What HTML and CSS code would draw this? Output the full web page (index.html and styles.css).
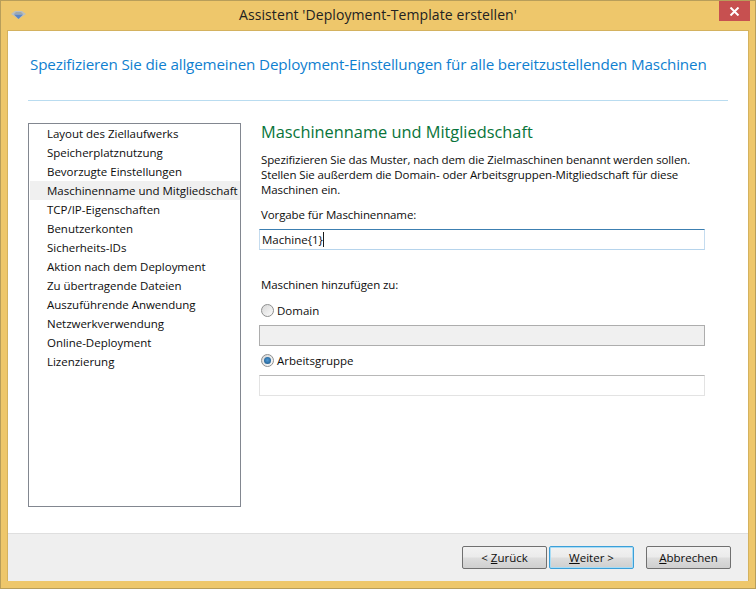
FILE: index.html
```html
<!DOCTYPE html>
<html lang="de">
<head>
<meta charset="utf-8">
<title>Assistent 'Deployment-Template erstellen'</title>
<link rel="stylesheet" href="styles.css">
</head>
<body>
<div class="window">
  <div class="titlebar">
    <svg class="appicon" width="15" height="8" viewBox="0 0 15 8"><path d="M0 3 4 0H11L15 3 7.500 8Z" fill="#b9bfc0"/><path d="M3 3.500H12L7.500 8Z" fill="#5b85c4"/><path d="M5 1H10L12 3H3Z" fill="#9ea8ad"/></svg>
    <div class="title">Assistent 'Deployment-Template erstellen'</div>
    <div class="close"><svg width="11" height="9" viewBox="0 0 11 9"><path d="M1.500.5 9.500 8.500M9.500.5 1.500 8.500" stroke="#fff" stroke-width="2" fill="none"/></svg></div>
  </div>
  <div class="client">
    <div class="header">Spezifizieren Sie die allgemeinen Deployment-Einstellungen für alle bereitzustellenden Maschinen</div>
    <div class="rule"></div>
    <div class="main">
      <ul class="steps">
        <li>Layout des Ziellaufwerks</li>
        <li>Speicherplatznutzung</li>
        <li>Bevorzugte Einstellungen</li>
        <li class="active">Maschinenname und Mitgliedschaft</li>
        <li>TCP/IP-Eigenschaften</li>
        <li>Benutzerkonten</li>
        <li>Sicherheits-IDs</li>
        <li>Aktion nach dem Deployment</li>
        <li>Zu übertragende Dateien</li>
        <li>Auszuführende Anwendung</li>
        <li>Netzwerkverwendung</li>
        <li>Online-Deployment</li>
        <li>Lizenzierung</li>
      </ul>
      <div class="panel">
        <h2 class="panel-title">Maschinenname und Mitgliedschaft</h2>
        <p class="intro">Spezifizieren Sie das Muster, nach dem die Zielmaschinen benannt werden sollen.<br>Stellen Sie außerdem die Domain- oder Arbeitsgruppen-Mitgliedschaft für diese<br>Maschinen ein.</p>
        <div class="label name-label">Vorgabe für Maschinenname:</div>
        <div class="field focused">Machine{1}<span class="caret"></span></div>
        <div class="label add-label">Maschinen hinzufügen zu:</div>
        <div class="radio-row first"><span class="radio"></span>Domain</div>
        <div class="field disabled"></div>
        <div class="radio-row"><span class="radio checked"></span>Arbeitsgruppe</div>
        <div class="field plain"></div>
      </div>
    </div>
    <div class="footer">
      <div class="btn"><span>&lt; <u>Z</u>urück</span></div>
      <div class="btn default"><span><u>W</u>eiter &gt;</span></div>
      <div class="btn cancel"><span><u>A</u>bbrechen</span></div>
    </div>
  </div>
</div>
</body>
</html>
```
FILE: styles.css
```css
* { box-sizing: border-box; }
html, body { margin: 0; padding: 0; }
body { width: 756px; height: 589px; overflow: hidden; font-family: "Open Sans", "Noto Sans", sans-serif; font-size: 11.5px; color: #0d0d0d; }
.window { width: 756px; height: 589px; background: #eec76b; border: 1px solid #b89e5a; display: flex; flex-direction: column; padding: 0 6px 7px; }
.titlebar { height: 29px; flex: none; display: flex; align-items: center; position: relative; }
.appicon { position: absolute; left: 4px; top: 10px; }
.title { width: 100%; text-align: center; font-size: 14px; color: #222; padding-bottom: 3px; letter-spacing: 0.08px; }
.close { position: absolute; right: -1px; top: 0; width: 31px; height: 20px; background: #c75050; display: flex; align-items: center; justify-content: center; }
.client { flex: 1; background: #fff; border: 1px solid #d4b25f; border-width: 1px 1px 0; display: flex; flex-direction: column; min-height: 0; }
.header { margin: 21px 0 0 22px; height: 24px; font-size: 15.2px; line-height: 24px; color: #0f7fd0; white-space: nowrap; letter-spacing: -0.15px; }
.rule { margin: 24px 20px 0; height: 1px; background: #b9dcf0; flex: none; }
.main { flex: 1; display: flex; padding: 21px 20px 25px; min-height: 0; }
.steps { list-style: none; margin: 1px 0 0; padding: 0 0 0 1px; width: 213px; height: 384px; border: 1px solid #828790; flex: none; }
.steps li { height: 19px; line-height: 19px; padding-left: 17px; white-space: nowrap; letter-spacing: -0.02px; }
.steps li.active { background: #f0f0f0; }
.panel { margin-left: 18px; width: 446px; }
.panel-title { margin: 0 0 0 2px; font-weight: 400; font-size: 16.35px; line-height: 20px; color: #08743a; white-space: nowrap; }
.intro { margin: 10px 0 0 2px; line-height: 15px; white-space: nowrap; letter-spacing: -0.11px; }
.label { margin-left: 2px; line-height: 15px; letter-spacing: -0.11px; }
.name-label { margin-top: 10px; }
.add-label { margin-top: 27px; }
.field { height: 21px; border: 1px solid #abadb3; background: #fff; }
.field.focused { margin-top: 7px; border-color: #5a9fd4 #c5dcef #b6d4ec; border-top-color: #3c7fb1; line-height: 19px; padding-left: 2px; display: flex; align-items: center; }
.caret { width: 1px; height: 15px; background: #1a1a1a; }
.field.disabled { background: #f0f0f0; border-color: #adadad; }
.field.plain { border-color: #b8b8b8 #e3e3e3 #e3e3e3; }
.radio-row { height: 15px; line-height: 15px; display: flex; align-items: center; margin: 7px 0 7px 2px; }
.radio-row.first { margin-top: 11px; }
.radio { width: 13px; height: 13px; border-radius: 50%; border: 1px solid #8e8f8f; background: linear-gradient(135deg, #d8d8d8, #fbfbfb); margin-right: 3px; flex: none; display: flex; align-items: center; justify-content: center; }
.radio.checked::after { content: ""; width: 7px; height: 7px; border-radius: 50%; background: radial-gradient(circle at 50% 45%, #4f9ad6, #17507f); }
.footer { height: 48px; flex: none; background: #efefef; border-top: 1px solid #dfdfdf; display: flex; align-items: flex-start; padding: 12px 17px 0 0; justify-content: flex-end; }
.btn { width: 85px; height: 23px; border: 1px solid #707070; border-radius: 2px; background: linear-gradient(#f2f2f2 0%, #ebebeb 48%, #dddddd 52%, #cfcfcf 100%); display: flex; align-items: center; justify-content: center; margin-left: 2px; color: #0d0d0d; }
.btn.default { border-color: #3c9fd8; box-shadow: inset 0 0 0 1px #a8dcf5; }
.btn.cancel { margin-left: 12px; }
```
